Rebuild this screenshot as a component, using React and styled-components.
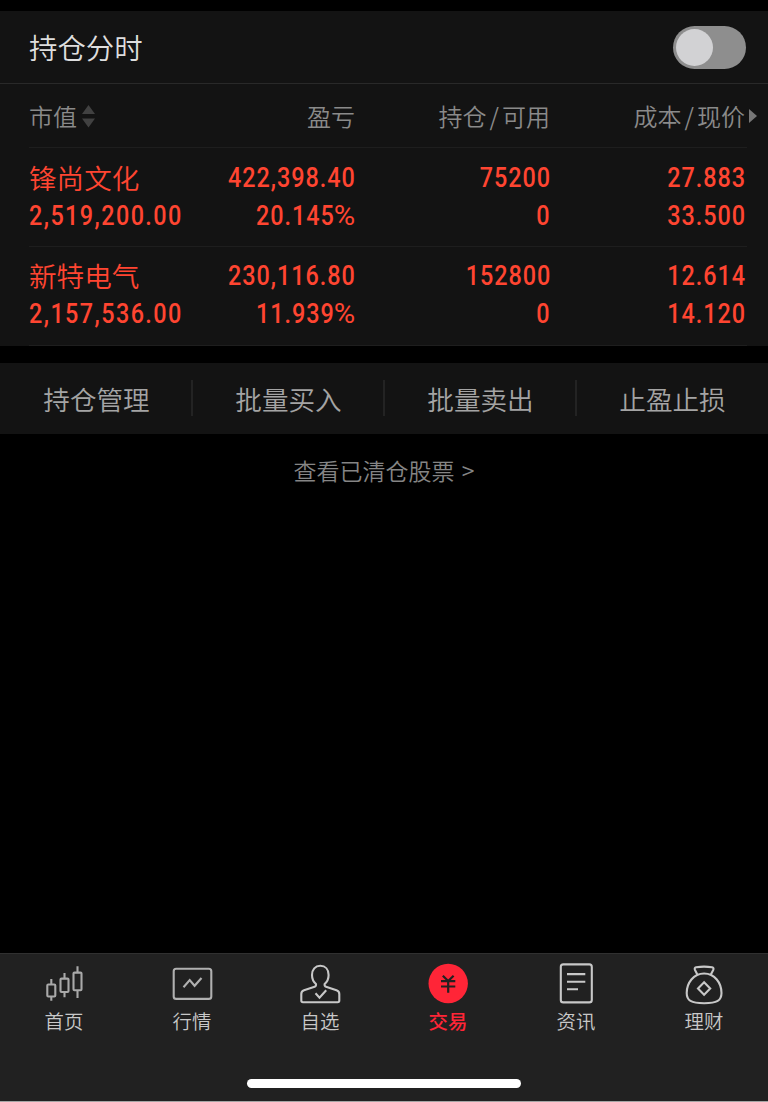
import React from "react";
import styled, { createGlobalStyle } from "styled-components";

const GlobalStyle = createGlobalStyle`
  *, *::before, *::after { box-sizing: border-box; }
  body {
    margin: 0;
    background: #000;
    font-family: "Noto Sans CJK SC", "Noto Sans", sans-serif;
    font-weight: 400;
  }
`;

const Screen = styled.div`
  width: 768px;
  height: 1102px;
  padding-top: 11px;
  background: #000;
  display: flex;
  flex-direction: column;
  overflow: hidden;
  white-space: nowrap;
`;

const Holdings = styled.section`
  background: #131313;
  height: 335px;
`;

const TitleBar = styled.header`
  height: 73px;
  padding: 0 22px 0 29px;
  display: flex;
  align-items: center;
  justify-content: space-between;
  border-bottom: 1px solid #292929;
`;

const Title = styled.h1`
  margin: 0;
  font-size: 28.4px;
  line-height: 40px;
  font-weight: 350;
  color: #dedede;
`;

const Switch = styled.button`
  width: 73px;
  height: 43px;
  margin-top: 1px;
  padding: 0 3px;
  border: 0;
  border-radius: 22px;
  background: #8e8e8e;
  display: flex;
  align-items: center;
`;

const Knob = styled.span`
  width: 37px;
  height: 37px;
  border-radius: 50%;
  background: #d2d2d4;
`;

const Table = styled.div`
  margin: 0 21px 0 29px;
`;

const Row = styled.div`
  display: grid;
  grid-template-columns: 160px 166px 195px 195px;
  border-bottom: 1px solid #1e1e1e;
`;

const HeadRow = styled(Row)`
  height: 64px;
  align-items: center;
  color: #8a8a8a;
  font-size: 24px;
  font-weight: 350;
  line-height: 34px;
`;

const HoldingRow = styled(Row)`
  height: 99px;
  padding-top: 11px;

  & + & {
    padding-top: 10px;
  }
`;

const HeadCell = styled.div`
  display: flex;
  align-items: center;
  justify-content: ${(p) => (p.$left ? "flex-start" : "flex-end")};
`;

const Slash = styled.span`
  margin: 0 3px;
`;

const SortIcon = styled.svg`
  margin-left: 5px;
`;

const MoreIcon = styled.svg`
  margin: 0 -12px 0 4px;
`;

const Cell = styled.div`
  display: flex;
  flex-direction: column;
  align-items: ${(p) => (p.$left ? "flex-start" : "flex-end")};
  color: #ff4531;
`;

const Name = styled.span`
  margin: -1px 0 1px;
  font-size: 27.6px;
  line-height: 38px;
  font-weight: 350;
`;

const Figure = styled.span`
  font-family: Roboto, sans-serif;
  font-size: 28.5px;
  font-weight: 500;
  line-height: 38px;
  letter-spacing: ${(p) => (p.$left ? 1.75 : 1.2)}px;
  margin-right: ${(p) => (p.$percent ? -1.6 : -0.9)}px;
  transform: scaleX(0.82);
  transform-origin: ${(p) => (p.$left ? "left" : "right")} center;
`;

const Percent = styled.span`
  display: inline-block;
  margin-left: 4px;
  font-weight: 400;
  transform: scaleX(1.25);
  transform-origin: calc(100% - 1.2px) center;
`;

const Actions = styled.nav`
  height: 71px;
  margin-top: 17px;
  padding-bottom: 1px;
  background: #131313;
  display: grid;
  grid-template-columns: repeat(4, 1fr);
  align-items: center;
`;

const Action = styled.button`
  height: 36px;
  margin-right: -1px;
  padding: 1px 0 0 2px;
  border: 0;
  border-right: 2px solid ${(p) => (p.$last ? "transparent" : "#232323")};
  background: none;
  color: #a4a4a4;
  font: inherit;
  font-size: 26.6px;
  font-weight: 350;
  line-height: 35px;
`;

const Cleared = styled.a`
  margin-top: 19px;
  text-align: center;
  color: #858585;
  font-size: 23px;
  font-weight: 350;
  line-height: 34px;
  word-spacing: 2px;
`;

const TabBar = styled.footer`
  height: 149px;
  margin-top: auto;
  background: #212121;
  border-top: 1px solid #303030;
  border-bottom: 1px solid #a5a5a5;
  display: flex;
  flex-direction: column;
  align-items: center;
`;

const Tabs = styled.div`
  width: 100%;
  height: 124px;
  display: grid;
  grid-template-columns: repeat(6, 1fr);
`;

const Tab = styled.button`
  padding: 8px 0 0;
  border: 0;
  background: none;
  display: flex;
  flex-direction: column;
  align-items: center;
  color: ${(p) => (p.$active ? "#ff2537" : "#c8c8c8")};
  font: inherit;
  font-size: 19.4px;
  font-weight: ${(p) => (p.$active ? 500 : 350)};
  line-height: 28px;
`;

const TabIcon = styled.svg`
  width: 44px;
  height: 44px;
  margin-bottom: 1px;
  fill: none;
  stroke: ${(p) => p.$tone};
  stroke-width: 2.1;
`;

const HomeIndicator = styled.div`
  width: 274px;
  height: 9px;
  margin-top: 1px;
  border-radius: 5px;
  background: #fff;
`;

const holdings = [
  { name: "锋尚文化", value: "2,519,200.00", profit: "422,398.40", rate: "20.145", held: "75200", free: "0", cost: "27.883", price: "33.500" },
  { name: "新特电气", value: "2,157,536.00", profit: "230,116.80", rate: "11.939", held: "152800", free: "0", cost: "12.614", price: "14.120" },
];

const actions = ["持仓管理", "批量买入", "批量卖出", "止盈止损"];

const tabs = [
  {
    label: "首页",
    tone: "#a9a9a9",
    icon: (
      <>
        <rect x="5.300" y="22.500" width="8" height="12" rx="1" />
        <path d="M9.300 17V22.500M9.300 34.500V38.700" />
        <rect x="18.500" y="16.600" width="8" height="13.400" rx="1" />
        <path d="M22.500 11V16.600M22.500 30V35.300" />
        <rect x="31.500" y="10.600" width="8" height="17.700" rx="1" />
        <path d="M35.500 4.300V10.600M35.500 28.300V36" />
      </>
    ),
  },
  {
    label: "行情",
    tone: "#b0b0b0",
    icon: (
      <>
        <rect x="3.700" y="6.700" width="37.600" height="30.200" rx="2.500" />
        <path d="M13.500 25.300L19.700 18L24.600 23.800L31.500 16" />
      </>
    ),
  },
  {
    label: "自选",
    tone: "#c8c8c8",
    icon: (
      <>
        <path d="M18 22C15 19.500 14 16.500 14 13C14 7.500 17.200 3.800 22.300 3.800S30.600 7.500 30.600 13C30.600 16.500 29.600 19.500 26.600 22Q26.300 24.300 28 24.800L38.500 28.300Q41.300 29.300 41.300 32V38.600Q41.300 40.300 39.600 40.300H5Q3.300 40.300 3.300 38.600V32Q3.300 29.300 6 28.300L16.600 24.800Q18.300 24.300 18 22Z" strokeLinejoin="round" />
        <path d="M17.500 31.300L21.500 35.600L28.200 28.300" />
      </>
    ),
  },
  {
    label: "交易",
    tone: "#212121",
    active: true,
    icon: (
      <>
        <circle cx="22.200" cy="21.500" r="19.700" fill="#ff2537" stroke="none" />
        <path d="M16.800 13.700L22.200 19L27.600 13.700M15 19.200H29.300M15 24.500H29.300M22.200 18.500V30.700" strokeWidth="2.200" />
      </>
    ),
  },
  {
    label: "资讯",
    tone: "#c8c8c8",
    icon: (
      <>
        <rect x="6.800" y="2.400" width="31" height="38" rx="2.500" />
        <path d="M13 12.100H31.300M13 19.700H31.300M13 27.300H24" />
      </>
    ),
  },
  {
    label: "理财",
    tone: "#c8c8c8",
    icon: (
      <>
        <path d="M15.600 13L13 8Q12 5.700 14.200 5.200Q22 4 30 5.200Q32.200 5.700 31.200 8L28.600 13" />
        <path d="M22.100 11.500C11.500 11.500 4.700 21 4.700 31C4.700 38.500 9 41.300 22.100 41.300S39.500 38.500 39.500 31C39.500 21 32.700 11.500 22.100 11.500Z" />
        <path d="M22.100 20.300L28.200 26.500L22.100 32.700L16 26.500Z" />
      </>
    ),
  },
];

function PairLabel({ first, second }) {
  return (
    <>
      {first}
      <Slash>/</Slash>
      {second}
    </>
  );
}

export default function App() {
  return (
    <>
      <GlobalStyle />
      <Screen>
        <Holdings>
          <TitleBar>
            <Title>持仓分时</Title>
            <Switch role="switch" aria-checked="false">
              <Knob />
            </Switch>
          </TitleBar>
          <Table>
            <HeadRow>
              <HeadCell $left>
                市值
                <SortIcon width="13" height="24" viewBox="0 0 13 24" fill="#414141">
                  <path d="M6.500 1L13 10H0ZM6.500 23.500L0 14.500H13Z" />
                </SortIcon>
              </HeadCell>
              <HeadCell>盈亏</HeadCell>
              <HeadCell><PairLabel first="持仓" second="可用" /></HeadCell>
              <HeadCell>
                <PairLabel first="成本" second="现价" />
                <MoreIcon width="8" height="14" viewBox="0 0 8 14" fill="#777">
                  <path d="M0 0L8 7L0 14Z" />
                </MoreIcon>
              </HeadCell>
            </HeadRow>
            {holdings.map((h) => (
              <HoldingRow key={h.name}>
                <Cell $left>
                  <Name>{h.name}</Name>
                  <Figure $left>{h.value}</Figure>
                </Cell>
                <Cell>
                  <Figure>{h.profit}</Figure>
                  <Figure $percent>{h.rate}<Percent>%</Percent></Figure>
                </Cell>
                <Cell>
                  <Figure>{h.held}</Figure>
                  <Figure>{h.free}</Figure>
                </Cell>
                <Cell>
                  <Figure>{h.cost}</Figure>
                  <Figure>{h.price}</Figure>
                </Cell>
              </HoldingRow>
            ))}
          </Table>
        </Holdings>
        <Actions>
          {actions.map((a, i) => (
            <Action key={a} $last={i === actions.length - 1}>{a}</Action>
          ))}
        </Actions>
        <Cleared>查看已清仓股票 &gt;</Cleared>
        <TabBar>
          <Tabs>
            {tabs.map((t) => (
              <Tab key={t.label} $active={t.active}>
                <TabIcon viewBox="0 0 44 44" $tone={t.tone}>{t.icon}</TabIcon>
                {t.label}
              </Tab>
            ))}
          </Tabs>
          <HomeIndicator />
        </TabBar>
      </Screen>
    </>
  );
}
